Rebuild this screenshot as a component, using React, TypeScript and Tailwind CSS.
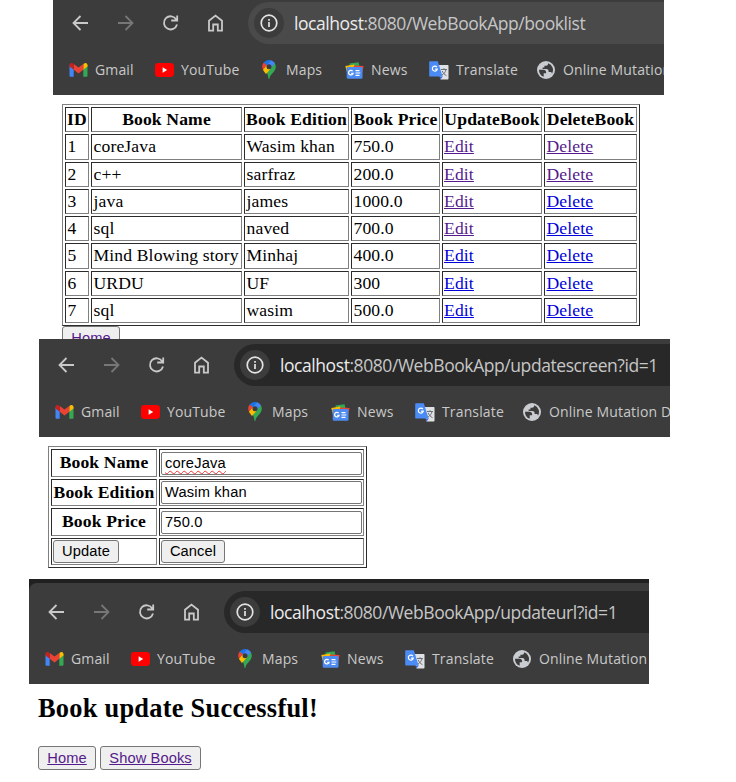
import type { ReactNode } from "react";

const GmailIcon = () => (
  <svg viewBox="0 0 19 14" className="h-[14px] w-[19px]">
    <path d="M0.5 2.2v10.3c0 .8.5 1.3 1.3 1.3h2.9V6z" fill="#4285f4" />
    <path d="M18.5 2.2v10.3c0 .8-.5 1.3-1.3 1.3h-2.9V6z" fill="#34a853" />
    <path d="M14.3 1v5.8l4.2-3.2V2c0-1.7-1.9-2.5-3.2-1.6z" fill="#fbbc04" />
    <path d="M4.7 6.8V1l4.8 3.6L14.3 1v5.8l-4.8 3.7z" fill="#ea4335" />
    <path d="M0.5 2v1.6l4.2 3.2V1l-1-.6C2.4-.5.5.3.5 2z" fill="#c5221f" />
  </svg>
);

const YouTubeIcon = () => (
  <svg viewBox="0 0 19 14" className="h-[14px] w-[19px]">
    <rect width="19" height="14" rx="3.4" fill="#ff0000" />
    <path d="M7.6 4.3v5.4L12.2 7z" fill="#fff" />
  </svg>
);

const MapsIcon = () => (
  <svg viewBox="0 0 14 20" className="h-[20px] w-[14px]">
    <path d="M11.9 2.3L4.2 11.5C5.4 13.7 6.1 15.6 6.4 18.3c.1.9 1.1.9 1.2 0C8.2 13.5 13.8 12 13.8 6.8c0-1.8-.7-3.4-1.9-4.5z" fill="#34a853" />
    <path d="M.9 9.6c.7 1.7 2 3 3.1 4.5l5.3-6.2-4.7-3.5z" fill="#fbbc04" />
    <path d="M1.8 2.5C-.2 4.8-.1 7.6 1 9.8l4.3-5.1z" fill="#ea4335" />
    <path d="M1.8 2.5l3.4 2.9L9 .3C6.3-.5 3.5.4 1.8 2.5z" fill="#1a73e8" />
    <path d="M9 .3L5 5l3.800 3.300 4-4.800C12 1.900 10.700.8 9 .3z" fill="#4285f4" />
    <circle cx="7" cy="6.7" r="2.5" fill="#3c3c3c" />
  </svg>
);

const NewsIcon = () => (
  <svg viewBox="0 0 19 17" className="h-[17px] w-[19px]">
    <path d="M4.500 1.500L13.500.3l1.500 6H5z" fill="#34a853" />
    <path d="M.3 4l9-1.500 1 6-8 3z" fill="#fbbc04" />
    <path d="M9 3.500l9.600.5L17 11 8 9z" fill="#ea4335" />
    <rect x="1.700" y="5" width="15.800" height="11.700" rx="1.300" fill="#4d8bf0" />
    <path d="M7.700 9.200A2.300 2.300 0 1 0 8.100 11.300H6.200" fill="none" stroke="#fff" strokeWidth="1.300" />
    <path d="M10.500 8.700h4M10.500 11h4.800M10.500 13.300h4" stroke="#fff" strokeWidth="1.200" />
  </svg>
);

const TranslateIcon = () => (
  <svg viewBox="0 0 20 19" className="h-[19px] w-[20px]">
    <path d="M8 4h10.500c.6 0 1 .4 1 1v12.500c0 .6-.4 1-1 1h-7z" fill="#dfe1e5" />
    <path d="M10.600 15.500h3.200l-2.300 3z" fill="#3367d6" />
    <path d="M1.200.3h7.600l4.800 15.200H1.200c-.6 0-1-.4-1-1V1.300c0-.6.400-1 1-1z" fill="#4b8bf5" />
    <path d="M7.900 6.100A2.500 2.500 0 1 0 8.300 8.200H6" fill="none" stroke="#fff" strokeWidth="1.200" />
    <path d="M12 8.500h6M15 7.200v1.300M17 8.600c-.6 2.500-2 4.200-4 5.500M13.200 10c.8 2 2.200 3.500 4.300 4.700" fill="none" stroke="#6b7078" strokeWidth="1" />
  </svg>
);

const GlobeIcon = () => (
  <svg viewBox="0 0 18 18" className="h-[18px] w-[18px]">
    <circle cx="9" cy="9" r="9" fill="#c9ccd1" />
    <path d="M2 8.700h4.500c1.700 0 2.600.9 2.600 2.600v.9h-2.400v3.500A7.200 7.200 0 0 1 2 8.700z" fill="#3c3c3c" />
    <path d="M11 2.200v.9c0 1-.8 1.700-1.800 1.700H7.400v1.800h-1.800v1.300h3.700c1.500 0 2.300.9 2.300 2.200v1h1.700c1 0 1.700.7 1.700 1.600A7.200 7.200 0 0 0 11 2.200z" fill="#3c3c3c" />
  </svg>
);

const bookmarks: { label: string; icon: ReactNode; width: string }[] = [
  { label: "Gmail", icon: <GmailIcon />, width: "w-[86px]" },
  { label: "YouTube", icon: <YouTubeIcon />, width: "w-[105px]" },
  { label: "Maps", icon: <MapsIcon />, width: "w-[85px]" },
  { label: "News", icon: <NewsIcon />, width: "w-[85px]" },
  { label: "Translate", icon: <TranslateIcon />, width: "w-[107px]" },
  { label: "Online Mutation D", icon: <GlobeIcon />, width: "w-[200px]" },
];

function BrowserBar({ path, className, pill }: { path: string; className: string; pill: string }) {
  return (
    <div className={`overflow-hidden bg-[#3c3c3c] font-['Open_Sans','Noto_Sans',sans-serif] ${className}`}>
      <div className="flex h-[42px] w-[700px] items-center">
        <svg viewBox="0 0 195 42" className="h-[42px] w-[195px] shrink-0" fill="none" strokeWidth="1.8">
          <path d="M35 21H21M27.500 14L20.500 21l7 7" stroke="#c9c9c9" />
          <path d="M65 21h14M72.500 14l7 7-7 7" stroke="#777" />
          <path d="M123.300 17.500A6.600 6.600 0 1 0 124 22.500M124.200 13.500v5h-6" stroke="#c9c9c9" />
          <path d="M156 28.700V18.800l6.500-5.200 6.500 5.200v9.900h-4.200v-6.200h-4.600v6.200z" stroke="#c9c9c9" />
        </svg>
        <div className={`flex h-[42px] flex-1 items-center rounded-l-full pl-[6px] ${pill}`}>
          <div className="flex size-[30px] items-center justify-center rounded-full bg-[#3c3c3c]">
            <svg viewBox="0 0 18 18" className="size-[18px]" fill="none" stroke="#e3e3e3" strokeWidth="1.7">
              <circle cx="9" cy="9" r="7.8" />
              <path d="M9 8v5M9 5v1.800" />
            </svg>
          </div>
          <div className="ml-[10px] whitespace-nowrap text-[17.5px] tracking-[-0.43px] text-[#c6c6c6]">
            <span className="text-[#ececec]">localhost</span>:8080/WebBookApp/{path}
          </div>
        </div>
      </div>
      <div className="mt-[11px] flex h-[30px] w-[700px] items-center pl-[15px]">
        {bookmarks.map((b) => (
          <div key={b.label} className={`flex shrink-0 items-center ${b.width}`}>
            <div className="flex w-[20px] shrink-0 items-center justify-center">{b.icon}</div>
            <span className="ml-[7px] whitespace-nowrap text-[14px] leading-5 text-[#c9c9c9]">{b.label}</span>
          </div>
        ))}
      </div>
    </div>
  );
}

const outer = "w-max border border-t-[#808080] border-l-[#808080] border-r-[#2b2b2b] border-b-[#2b2b2b] p-[2px] grid gap-[2px]";
const cell = "border border-t-[#2b2b2b] border-l-[#2b2b2b] border-r-[#808080] border-b-[#808080] flex items-center whitespace-nowrap";

const headers = ["ID", "Book Name", "Book Edition", "Book Price", "UpdateBook", "DeleteBook"];
const rows = [
  ["1", "coreJava", "Wasim khan", "750.0"],
  ["2", "c++", "sarfraz", "200.0"],
  ["3", "java", "james", "1000.0"],
  ["4", "sql", "naved", "700.0"],
  ["5", "Mind Blowing story", "Minhaj", "400.0"],
  ["6", "URDU", "UF", "300"],
  ["7", "sql", "wasim", "500.0"],
];

const Link = ({ children, visited }: { children: ReactNode; visited: boolean }) => (
  <a href="#" className={`underline ${visited ? "text-[#551a8b]" : "text-[#0000d8]"}`}>{children}</a>
);

const Button = ({ children, className }: { children: ReactNode; className: string }) => (
  <button className={`flex shrink-0 items-center justify-center whitespace-nowrap rounded-[3px] border border-[#767676] bg-[#efefef] font-['Liberation_Sans',Arial,sans-serif] text-[14.667px] leading-none tracking-[0.1px] ${className}`}>
    {children}
  </button>
);

const fields = [
  ["Book Name", "coreJava"],
  ["Book Edition", "Wasim khan"],
  ["Book Price", "750.0"],
];

export default function App() {
  return (
    <div className="h-[782px] w-[736px] overflow-hidden bg-white font-['Liberation_Serif','Times_New_Roman',serif] text-[17.6px] leading-[20px] tracking-[0.14px] text-black">
      <section className="h-[339px] overflow-hidden">
        <BrowserBar path="booklist" className="ml-[53px] h-[95px] w-[611px] pt-[2px]" pill="bg-[#4a4a4a]" />
        <div className={`ml-[62px] mt-[9px] grid-cols-[24px_151px_105px_89px_100px_93px] grid-rows-[25px_26px_25px_25px_25px_26px_25px_25px] ${outer}`}>
          {headers.map((h) => (
            <div key={h} className={`justify-center pb-[2px] font-bold ${cell}`}>{h}</div>
          ))}
          {rows.map((r, i) => [
            ...r.map((v, j) => (
              <div key={`${i}-${j}`} className={`pb-[2px] pl-[1.5px] ${cell}`}>{v}</div>
            )),
            <div key={`${i}-e`} className={`pb-[2px] pl-[1px] ${cell}`}><Link visited={i < 4}>Edit</Link></div>,
            <div key={`${i}-d`} className={`pb-[2px] pl-[1.5px] ${cell}`}><Link visited={i < 2}>Delete</Link></div>,
          ])}
        </div>
        <Button className="ml-[62px] h-[24px] w-[58px]"><Link visited>Home</Link></Button>
      </section>

      <section className="h-[240px]">
        <BrowserBar path="updatescreen?id=1" className="ml-[39px] h-[98px] w-[631px] pt-[5px]" pill="bg-[#282828]" />
        <div className={`ml-[48px] mt-[9px] grid-cols-[106px_205px] grid-rows-[28px_27px_28px_27px] ${outer}`}>
          {fields.map(([name, value]) => [
            <div key={name} className={`justify-center pb-[2px] font-bold ${cell}`}>{name}</div>,
            <div key={`${name}-v`} className={`pl-[1px] ${cell}`}>
              <div className="flex h-[23px] w-[201px] items-center rounded-[2px] border border-[#767676] pl-[3px] font-['Liberation_Sans',Arial,sans-serif] text-[14.667px] leading-none tracking-[0.17px]">
                <span className={value === "coreJava" ? "underline decoration-[#e33] decoration-wavy decoration-[1.3px] underline-offset-[2px] [text-decoration-skip-ink:none]" : ""}>{value}</span>
              </div>
            </div>,
          ])}
          <div className={`pl-[1px] ${cell}`}><Button className="h-[23px] w-[66px]">Update</Button></div>
          <div className={`pl-[1px] ${cell}`}><Button className="h-[23px] w-[64px]">Cancel</Button></div>
        </div>
      </section>

      <section>
        <div className="ml-[29px] w-[620px] bg-[#202020] pt-[4px]">
          <BrowserBar path="updateurl?id=1" className="h-[101px] w-[620px] rounded-tl-[8px] pt-[8px]" pill="bg-[#282828]" />
        </div>
        <h2 className="ml-[38px] mt-[9px] text-[26.4px] font-bold leading-[30px] tracking-[0.25px]">Book update Successful!</h2>
        <div className="ml-[38px] mt-[23px] flex gap-[4px]">
          <Button className="h-[24px] w-[58px]"><Link visited>Home</Link></Button>
          <Button className="h-[24px] w-[101px]"><Link visited>Show Books</Link></Button>
        </div>
      </section>
    </div>
  );
}
